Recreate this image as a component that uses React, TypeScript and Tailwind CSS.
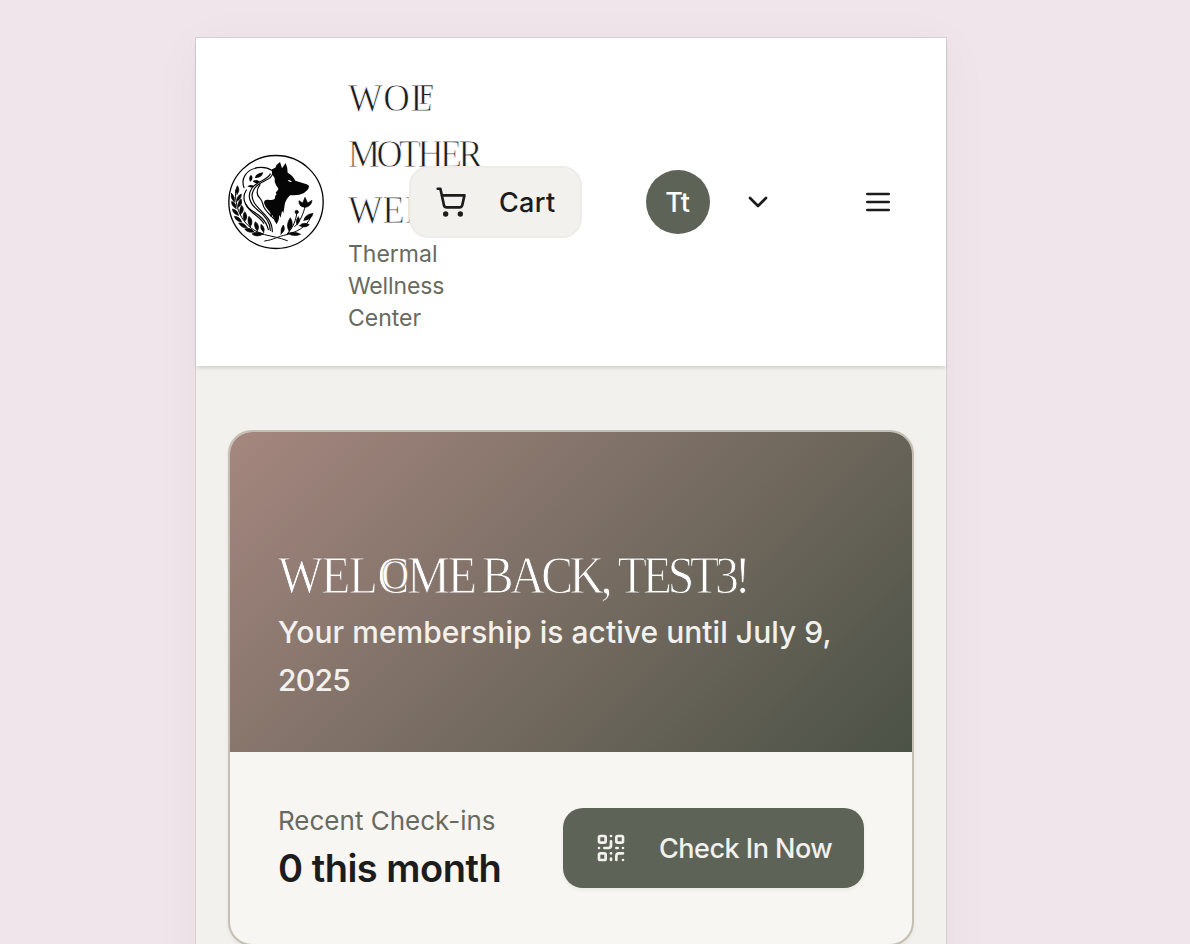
import { ChevronDown, QrCode, ShoppingCart } from "lucide-react";

function Logo() {
  return (
    <svg viewBox="24 27 288 288" className="size-24 shrink-0" fill="none" stroke="#050505" strokeLinecap="round" strokeLinejoin="round">
      <ellipse cx="168" cy="171" rx="141.5" ry="139.5" strokeWidth="4" fill="#fff" />
      {/* wolf */}
      <path
        d="M156 73 L166 68 Q168 59 180 51 Q184 62 186 70 L197 54 Q203 68 203 83 Q218 90 226 107 L260 118 L267 122 Q267 130 263 134 L252 144 Q239 151 222 151 L210 151 Q198 163 195 174 L190 205 L186 197 L182 218 L178 210 Q178 226 170 238 Q160 225 158 211 L151 215 Q154 204 145 196 Q136 187 132 174 Q132 163 144 164 Q163 167 165 159 Q164 151 170 148 L167 143 L173 136 Q178 132 169 122 Q162 111 164 99 Q154 88 156 73Z"
        fill="#050505"
        stroke="none"
      />
      <path d="M203 105 Q210 104 216 110 Q208 113 203 105Z" fill="#fff" stroke="none" />
      {/* hair */}
      <g strokeWidth="3.6">
        <path d="M155 76 C132 60 91 66 75 91 C67 104 68 117 72 128" />
        <path d="M158 82 C159 98 142 103 126 112 C99 126 88 150 103 174 C119 200 157 217 157 260" />
        <path d="M79 135 C64 158 75 184 94 196 C119 211 138 225 145 254" />
        <path d="M151 87 C142 106 112 107 96 129 C79 153 91 178 112 194 C139 214 151 233 151 256" />
        <path d="M120 119 C108 135 109 151 120 160 C128 167 127 176 132 187 C139 201 151 210 160 220" />
        <path d="M78 178 C88 204 119 213 131 235" />
      </g>
      {/* leaves in the hair */}
      <g fill="#050505" stroke="none">
        <path d="M105 99 Q106 85 130 82 Q125 101 105 99Z" />
        <path d="M91 110 Q83 100 93 89 Q103 100 91 110Z" />
        <path d="M98 109 Q111 101 119 110 Q108 120 98 109Z" />
        <path d="M82 124 Q96 116 103 125 Q92 130 82 124Z" />
      </g>
      {/* wreath stems */}
      <g strokeWidth="3">
        <path d="M47 135 C42 192 71 252 134 269 C158 275 176 277 202 287" />
        <path d="M134 288 C163 284 171 275 200 269 C244 259 271 231 274 209" />
        <path d="M200 269 C222 244 227 226 231 202" />
        <path d="M224 245 C242 229 250 205 256 182" />
      </g>
      <g fill="#050505" stroke="#050505" strokeWidth="2">
        <path d="M51 148 Q44 135 52 122 Q62 136 51 148Z" />
        <path d="M43 171 Q30 159 34 144 Q47 156 43 171Z" />
        <path d="M50 169 Q51 151 64 147 Q65 162 50 169Z" />
        <path d="M48 190 Q34 184 35 169 Q50 175 48 190Z" />
        <path d="M54 187 Q52 171 63 162 Q70 178 54 187Z" />
        <path d="M55 211 Q39 207 37 192 Q54 195 55 211Z" />
        <path d="M61 209 Q56 193 65 181 Q77 196 61 209Z" />
        <path d="M65 231 Q48 230 43 214 Q60 215 65 231Z" />
        <path d="M74 229 Q65 213 74 200 Q87 215 74 229Z" />
        <path d="M81 248 Q65 250 56 234 Q74 232 81 248Z" />
        <path d="M91 245 Q79 230 87 214 Q103 228 91 245Z" />
        <path d="M102 261 Q84 265 74 252 Q92 245 102 261Z" />
        <path d="M112 258 Q99 244 106 230 Q122 242 112 258Z" />
        <path d="M130 267 Q111 279 96 267 Q113 256 130 267Z" />
        <path d="M131 262 Q119 252 123 238 Q137 248 131 262Z" />
        <circle cx="230" cy="201" r="5" />
        <path d="M254 187 Q235 184 237 167 L248 174 L255 157 L263 174 L276 166 Q274 186 254 187Z" />
        <path d="M207 258 Q196 239 211 218 Q225 240 207 258Z" />
        <path d="M231 239 Q225 226 235 215 Q244 228 231 239Z" />
        <path d="M252 226 Q254 209 279 205 Q275 225 252 226Z" />
        <path d="M239 242 Q250 229 268 239 Q255 251 239 242Z" />
        <path d="M204 265 Q223 257 242 268 Q220 277 204 265Z" />
        <path d="M183 267 Q181 251 190 240 Q199 255 183 267Z" />
      </g>
    </svg>
  );
}

function MenuIcon() {
  return (
    <svg viewBox="0 0 24 24" className="size-8" fill="none" stroke="currentColor" strokeWidth="2" strokeLinecap="round">
      <path d="M4 6h16M4 12h16M4 18h16" />
    </svg>
  );
}

const display = "font-['Liberation_Serif',serif] whitespace-nowrap origin-left";

function Header() {
  return (
    <header className="relative flex h-[328px] items-center bg-white pl-8 shadow-[0_3px_4px_-1px_rgba(0,0,0,0.14)]">
      <Logo />
      <div className="ml-6 w-[61px] shrink-0">
        <h1 className={`${display} text-[40px] leading-[56px] text-[#1c1c1c] [-webkit-text-stroke:0.8px_#fff]`}>
          <span className="block h-14 origin-left scale-x-[0.92] tracking-[0.6px]">
            WOL<span className="relative -top-[7px] -ml-[16px] text-[29px] leading-none [-webkit-text-stroke:0.3px_#fff]">F</span>
          </span>
          <span className="block h-14 origin-left scale-x-90 tracking-[-3.9px]">MOTHER</span>
          <span className="block h-14 origin-left scale-x-[0.92] tracking-[-0.4px]">WELL</span>
        </h1>
        <p className="text-[23px] leading-8 text-[#676a5f]">
          Thermal <span className="tracking-[-0.15px]">Wellness</span> Center
        </p>
      </div>
      <button className="relative flex h-[72px] w-[173px] shrink-0 items-center gap-8 rounded-[20px] border-2 border-[#edece8] bg-[#f2f1ed] pl-6 text-[27px] font-medium text-[#1c1c1c]">
        <ShoppingCart className="size-8 shrink-0" />
        <span className="pt-0.5 tracking-[0.3px]">Cart</span>
      </button>
      <button className="ml-16 flex shrink-0 items-center gap-8">
        <span className="flex size-16 items-center justify-center rounded-full bg-[#5d6357] pt-0.5 text-[27px] font-medium tracking-[0.8px] text-white">Tt</span>
        <ChevronDown className="size-8 text-[#1c1c1c]" />
      </button>
      <button className="ml-[88px] shrink-0 text-[#1c1c1c]">
        <MenuIcon />
      </button>
    </header>
  );
}

function WelcomeCard() {
  return (
    <section className="overflow-hidden rounded-[24px] border-2 border-[#c5beb3] bg-[#f7f6f2] shadow-[0_2px_4px_rgba(0,0,0,0.06)]">
      <div className="flex h-80 flex-col justify-end bg-[linear-gradient(135deg,#a5877f,#4b5246)] p-12">
        <h2 className={`${display} h-16 scale-x-90 text-[53px] leading-[62px] text-white`}>
          <span className="tracking-[-1.9px] [-webkit-text-stroke:0.9px_#88766e]">
            WE<span className="tracking-[-0.4px]">L</span>C
            <span className="relative -top-[4px] -ml-[29px] text-[42px] leading-none [-webkit-text-stroke:0.5px_#88766e]">O</span>ME
            <span className="tracking-[-6px]"> </span>
          </span>
          <span className="tracking-[-3.8px] [-webkit-text-stroke:0.9px_#766b62]">BACK, </span>
          <span className="tracking-[-4.6px] [-webkit-text-stroke:0.9px_#67645a]">TEST3!</span>
        </h2>
        <p className="text-[30px] leading-[48px] font-medium tracking-[0.04px] text-[#f2f1ed]">
          Your membership is active until July 9, <span className="tracking-[-0.7px]">2025</span>
        </p>
      </div>
      <div className="flex items-center justify-between p-12">
        <div className="whitespace-nowrap">
          <p className="pt-0.5 text-[26px] leading-[38px] text-[#676a5f]">Recent Check-ins</p>
          <p className="text-[38px] leading-[56px] font-semibold tracking-[-0.5px] text-[#1c1c1c]">0 this month</p>
        </div>
        <button className="flex h-20 w-[301px] shrink-0 items-center gap-8 rounded-[20px] bg-[#5d6357] pl-8 text-[27px] font-medium whitespace-nowrap text-[#f2f1ed] shadow-[0_2px_4px_rgba(0,0,0,0.06)]">
          <QrCode className="size-8 shrink-0" />
          <span className="pt-0.5 tracking-[-0.5px]">Check In Now</span>
        </button>
      </div>
    </section>
  );
}

export default function App() {
  return (
    <div className="h-[944px] overflow-hidden bg-[#f0e5ea] pt-[37px] pl-[195px] font-['Inter',sans-serif]">
      <div className="h-[1100px] w-[752px] border border-[#d3cfd2] bg-[#f2f1ed] shadow-[0_8px_48px_rgba(40,40,40,0.04)]">
        <Header />
        <main className="px-8 pt-16">
          <WelcomeCard />
        </main>
      </div>
    </div>
  );
}
